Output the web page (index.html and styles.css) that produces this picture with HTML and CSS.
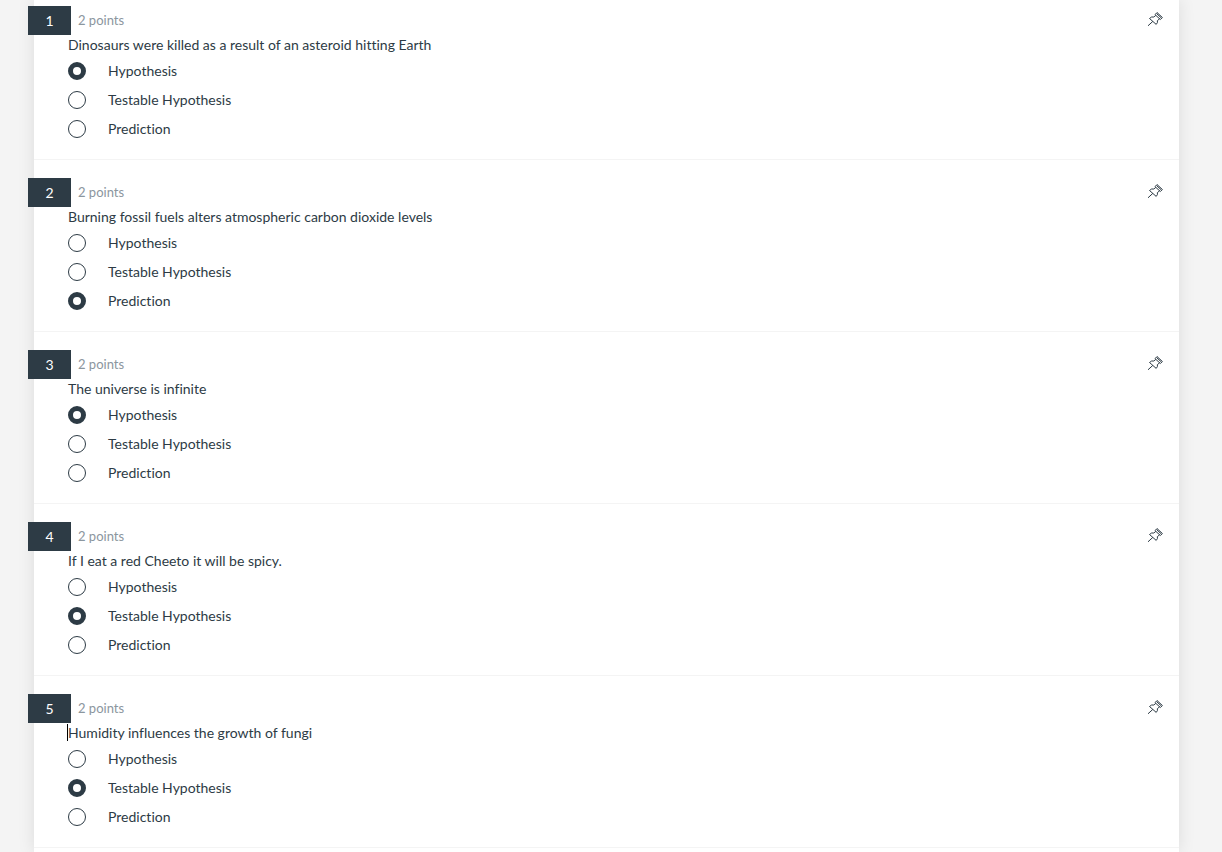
FILE: index.html
```
<!DOCTYPE html>
<html lang="en">
<head>
    <meta charset="UTF-8">
    <meta name="viewport" content="width=device-width, initial-scale=1.0">
    <title>Quiz</title>
    <link rel="stylesheet" href="styles.css">
</head>
<body>
    <svg class="sprite" aria-hidden="true">
        <symbol id="pin" viewBox="0 0 16 16">
            <path d="M1 14.8 L5.8 10.4 M8 3.6 L10 1.5 L15.4 6.5 L13.4 8.5 Z M8.8 4.4 L6.8 6 L4.6 6 L2.5 7.5 L9.2 13.4 L10.4 11.6 L10.4 9.6 L12.6 7.8 M9.6 2.6 L14.4 7"/>
        </symbol>
    </svg>

    <main class="quiz">
        <form>
            <fieldset class="question">
                <div class="question_head">
                    <span class="number">1</span>
                    <span class="points">2 points</span>
                    <button type="button" class="pin" aria-label="Pin question 1"><svg><use href="#pin"/></svg></button>
                </div>
                <p class="prompt">Dinosaurs were killed as a result of an asteroid hitting Earth</p>
                <label class="answer"><input type="radio" name="q1" checked>Hypothesis</label>
                <label class="answer"><input type="radio" name="q1">Testable Hypothesis</label>
                <label class="answer"><input type="radio" name="q1">Prediction</label>
            </fieldset>

            <fieldset class="question">
                <div class="question_head">
                    <span class="number">2</span>
                    <span class="points">2 points</span>
                    <button type="button" class="pin" aria-label="Pin question 2"><svg><use href="#pin"/></svg></button>
                </div>
                <p class="prompt">Burning fossil fuels alters atmospheric carbon dioxide levels</p>
                <label class="answer"><input type="radio" name="q2">Hypothesis</label>
                <label class="answer"><input type="radio" name="q2">Testable Hypothesis</label>
                <label class="answer"><input type="radio" name="q2" checked>Prediction</label>
            </fieldset>

            <fieldset class="question">
                <div class="question_head">
                    <span class="number">3</span>
                    <span class="points">2 points</span>
                    <button type="button" class="pin" aria-label="Pin question 3"><svg><use href="#pin"/></svg></button>
                </div>
                <p class="prompt">The universe is infinite</p>
                <label class="answer"><input type="radio" name="q3" checked>Hypothesis</label>
                <label class="answer"><input type="radio" name="q3">Testable Hypothesis</label>
                <label class="answer"><input type="radio" name="q3">Prediction</label>
            </fieldset>

            <fieldset class="question">
                <div class="question_head">
                    <span class="number">4</span>
                    <span class="points">2 points</span>
                    <button type="button" class="pin" aria-label="Pin question 4"><svg><use href="#pin"/></svg></button>
                </div>
                <p class="prompt">If I eat a red Cheeto it will be spicy.</p>
                <label class="answer"><input type="radio" name="q4">Hypothesis</label>
                <label class="answer"><input type="radio" name="q4" checked>Testable Hypothesis</label>
                <label class="answer"><input type="radio" name="q4">Prediction</label>
            </fieldset>

            <fieldset class="question">
                <div class="question_head">
                    <span class="number">5</span>
                    <span class="points">2 points</span>
                    <button type="button" class="pin" aria-label="Pin question 5"><svg><use href="#pin"/></svg></button>
                </div>
                <p class="prompt caret">Humidity influences the growth of fungi</p>
                <label class="answer"><input type="radio" name="q5">Hypothesis</label>
                <label class="answer"><input type="radio" name="q5" checked>Testable Hypothesis</label>
                <label class="answer"><input type="radio" name="q5">Prediction</label>
            </fieldset>
        </form>
    </main>
</body>
</html>
```
FILE: styles.css
```
* {
    margin: 0;
    padding: 0;
    box-sizing: border-box;
}

body {
    background: #f4f4f4;
    color: #2d3b45;
    font: 14px/20px Lato, sans-serif;
    font-variant-ligatures: none;
}

.sprite {
    display: none;
}

.quiz {
    min-height: 100vh;
    margin: 0 43px 0 34px;
    background: #fff;
    box-shadow: 0 0 16px rgba(0, 0, 0, 0.1);
}

.question {
    padding: 18px 16px 17px 34px;
    border: none;
    border-bottom: 1px solid #f4f4f4;
}

.question:first-child {
    padding-top: 6px;
}

/* number tab sticks out past the left edge of the sheet */
.question_head {
    display: flex;
    gap: 7px;
    margin-left: -40px;
}

.number {
    width: 43px;
    line-height: 29px;
    background: #2d3b45;
    color: #fff;
    text-align: center;
}

.points {
    font-size: 13px;
    line-height: 28px;
    color: #8b969e;
}

.pin {
    width: 16px;
    height: 26px;
    margin-left: auto;
    border: none;
    background: none;
    cursor: pointer;
}

.pin svg {
    display: block;
    width: 16px;
    height: 16px;
    margin: auto;
    fill: none;
    stroke: #2d3b45;
    stroke-width: 1;
}

.caret {
    position: relative;
}

.caret::before {
    content: "";
    position: absolute;
    left: -1px;
    top: 1px;
    width: 1px;
    height: 17px;
    background: #000;
}

.answer {
    display: flex;
    gap: 22px;
    padding: 7px 0 4px;
    line-height: 18px;
}

.answer input {
    appearance: none;
    width: 18px;
    height: 18px;
    border: 1px solid #2d3b45;
    border-radius: 50%;
    background: #fff;
}

.answer input:checked {
    border-width: 5px;
}
```
